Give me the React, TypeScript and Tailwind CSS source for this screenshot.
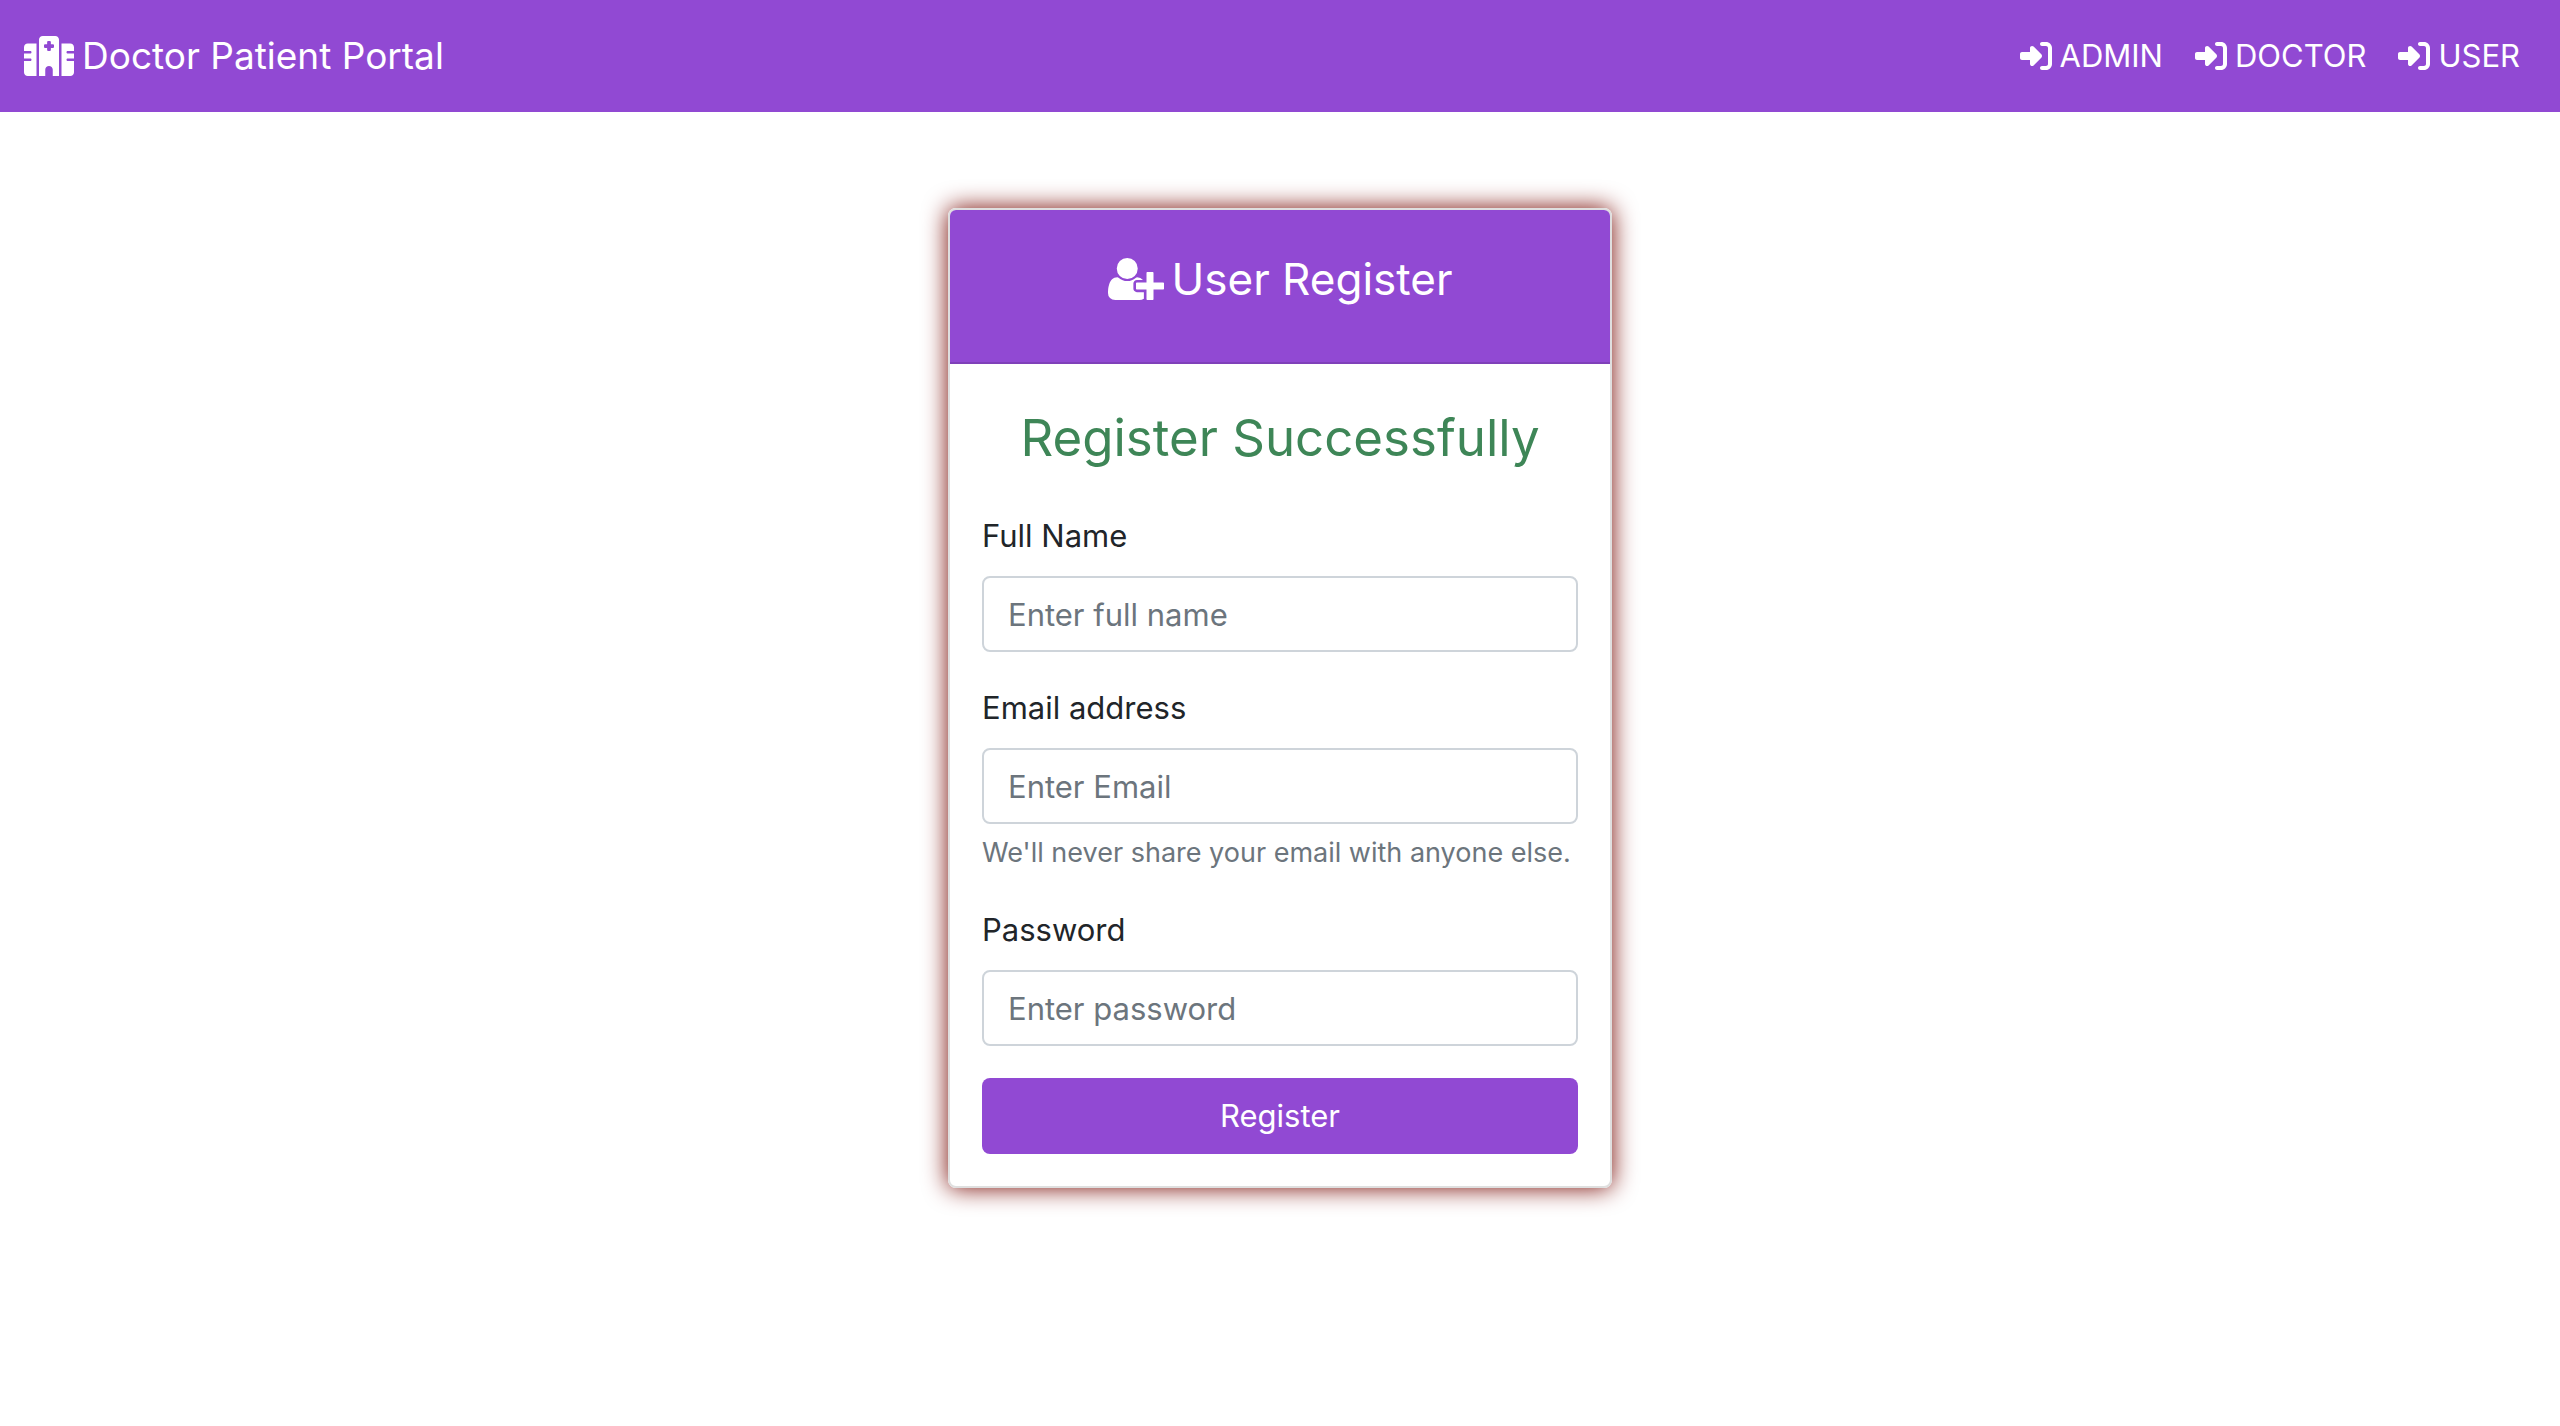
import { FaRightToBracket, FaHospital } from "react-icons/fa6";

const links = ["ADMIN", "DOCTOR", "USER"];

type FieldProps = { id: string; label: string; type: string; placeholder: string; hint?: string };

function UserPlusIcon() {
  return (
    <svg viewBox="0 0 2048 1536" className="h-[42px] w-14" fill="currentColor" aria-hidden="true">
      <path d="M704 768q-159 0-271.500-112.500T320 384 432.500 112.500 704 0t271.500 112.500T1088 384 975.500 655.500 704 768zM1664 896h352q13 0 22.500 9.500t9.500 22.500v192q0 13-9.500 22.500t-22.500 9.500h-352v352q0 13-9.500 22.500t-22.500 9.500h-192q-13 0-22.500-9.500t-9.500-22.500v-352h-352q-13 0-22.500-9.500t-9.500-22.500V928q0-13 9.500-22.500t22.500-9.500h352V544q0-13 9.500-22.500t22.500-9.500h192q13 0 22.500 9.500t9.500 22.500v352zM928 1120q0 52 38 90t90 38h256v238q-68 50-171 50H267q-121 0-194-69T0 1277q0-53 3.500-103.500t14-109T44 956t43-97.500 62-81 85.500-53.500T346 704q19 0 39 17 79 61 154.500 91.500T704 843t164.500-30.500T1023 721q20-17 39-17 132 0 217 96h-223q-52 0-90 38t-38 90v192z" />
    </svg>
  );
}

function Field({ id, label, type, placeholder, hint }: FieldProps) {
  return (
    <div className="mb-8">
      <label htmlFor={id} className="mb-4 block">{label}</label>
      <input
        id={id}
        type={type}
        placeholder={placeholder}
        className="block h-[76px] w-full rounded-lg border-2 border-[#ced4da] bg-white px-6 text-[#212529] placeholder:text-[#6c757d]"
      />
      {hint && <p className="mt-2 text-[27px] leading-[42px] text-[#6c757d]">{hint}</p>}
    </div>
  );
}

export default function App() {
  return (
    <div className="min-h-screen bg-white font-['Inter',sans-serif] text-[31px] leading-[48px] text-[#212529]">
      <header className="flex h-28 items-center justify-between bg-[#9149d3] px-6 text-white">
        <a href="#home" className="flex items-center gap-2 text-[37px]">
          <FaHospital className="h-10 w-[50px]" />
          Doctor Patient Portal
        </a>
        <nav className="flex gap-8 pr-4">
          {links.map((l) => (
            <a key={l} href="#login" className="flex items-center gap-2">
              <FaRightToBracket className="size-8" />
              {l}
            </a>
          ))}
        </nav>
      </header>
      <main className="mx-auto mt-24 w-full max-w-[664px] rounded-lg border-2 border-[#dfdfdf] shadow-[0_0_24px_0_#780a04]">
        <div className="flex justify-center rounded-t-md border-b-2 border-[#7f40b9] bg-[#9149d3] pt-10 pb-[54px] text-white">
          <h1 className="flex h-[58px] items-center gap-2 text-[44px]"><UserPlusIcon /> User Register</h1>
        </div>
        <form className="p-8">
          <p className="mt-2 mb-10 text-center text-[51px] leading-[68px] text-[#3e8657]">Register Successfully</p>
          <Field id="name" label="Full Name" type="text" placeholder="Enter full name" />
          <Field id="email" label="Email address" type="email" placeholder="Enter Email" hint="We'll never share your email with anyone else." />
          <Field id="password" label="Password" type="password" placeholder="Enter password" />
          <button type="button" className="block h-[76px] w-full rounded-lg bg-[#9149d3] text-white">Register</button>
        </form>
      </main>
    </div>
  );
}
